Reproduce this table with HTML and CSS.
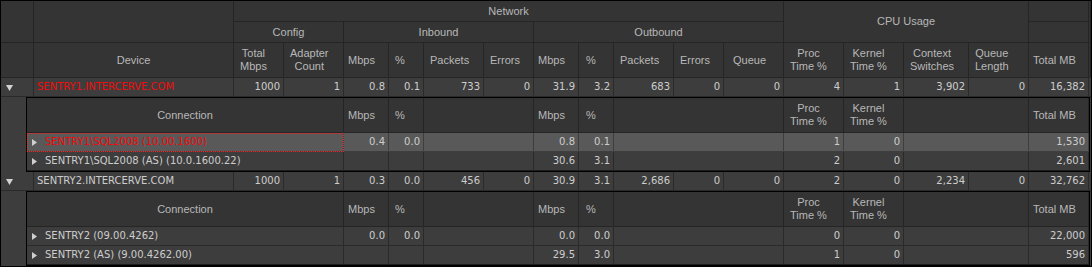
FILE: index.html
```html
<!DOCTYPE html>
<html>
<head>
<meta charset="utf-8">
<link rel="stylesheet" href="styles.css">
</head>
<body>
<div class="grid">
  <div class="head main-cols">
    <div class="hc c1"></div>
    <div class="hc c2"></div>
    <div class="hc net">Network</div>
    <div class="hc cpu">CPU Usage</div>
    <div class="hc r1 c18"></div>
    <div class="hc r1 c19"></div>
    <div class="hc config">Config</div>
    <div class="hc inbound">Inbound</div>
    <div class="hc outbound">Outbound</div>
    <div class="hc r2 c18"></div>
    <div class="hc r2 c19"></div>

    <div class="hc"></div>
    <div class="hc center">Device</div>
    <div class="hc leaf"><span>Total<br>Mbps</span></div>
    <div class="hc leaf"><span>Adapter<br>Count</span></div>
    <div class="hc leaf p4">Mbps</div>
    <div class="hc leaf">%</div>
    <div class="hc leaf">Packets</div>
    <div class="hc leaf">Errors</div>
    <div class="hc leaf p4">Mbps</div>
    <div class="hc leaf p7">%</div>
    <div class="hc leaf">Packets</div>
    <div class="hc leaf">Errors</div>
    <div class="hc leaf p9">Queue</div>
    <div class="hc leaf"><span>Proc<br>Time %</span></div>
    <div class="hc leaf"><span>Kernel<br>Time %</span></div>
    <div class="hc leaf"><span>Context<br>Switches</span></div>
    <div class="hc leaf"><span>Queue<br>Length</span></div>
    <div class="hc leaf p4">Total MB</div>
    <div class="hc"></div>
  </div>

  <div class="row main-cols">
    <div class="dc exp"><svg width="7" height="6" viewBox="0 0 7 6"><polygon points="0,0 7,0 3.5,6" fill="#d2d2d2"/></svg></div>
    <div class="dc name red">SENTRY1.INTERCERVE.COM</div>
    <div class="dc num">1000</div>
    <div class="dc num">1</div>
    <div class="dc num">0.8</div>
    <div class="dc num">0.1</div>
    <div class="dc num">733</div>
    <div class="dc num">0</div>
    <div class="dc num">31.9</div>
    <div class="dc num">3.2</div>
    <div class="dc num">683</div>
    <div class="dc num">0</div>
    <div class="dc num">0</div>
    <div class="dc num">4</div>
    <div class="dc num">1</div>
    <div class="dc num">3,902</div>
    <div class="dc num">0</div>
    <div class="dc num">16,382</div>
    <div class="dc fill"></div>
  </div>

  <div class="detail-wrap">
    <div class="detail">
      <div class="dhead det-cols">
        <div class="hc center">Connection</div>
        <div class="hc leaf p4">Mbps</div>
        <div class="hc leaf">%</div>
        <div class="hc"></div>
        <div class="hc leaf p4">Mbps</div>
        <div class="hc leaf p7">%</div>
        <div class="hc"></div>
        <div class="hc leaf"><span>Proc<br>Time %</span></div>
        <div class="hc leaf"><span>Kernel<br>Time %</span></div>
        <div class="hc"></div>
        <div class="hc leaf p4">Total MB</div>
      </div>
      <div class="row det-cols selected">
        <div class="dc conn focus red"><svg width="5" height="7" viewBox="0 0 5 7"><polygon points="0,0 5,3.5 0,7" fill="#cfcfcf"/></svg><span>SENTRY1\SQL2008 (10.00.1600)</span></div>
        <div class="dc num">0.4</div>
        <div class="dc num">0.0</div>
        <div class="dc"></div>
        <div class="dc num">0.8</div>
        <div class="dc num">0.1</div>
        <div class="dc"></div>
        <div class="dc num">1</div>
        <div class="dc num">0</div>
        <div class="dc"></div>
        <div class="dc num">1,530</div>
      </div>
      <div class="row det-cols last">
        <div class="dc conn"><svg width="5" height="7" viewBox="0 0 5 7"><polygon points="0,0 5,3.5 0,7" fill="#cfcfcf"/></svg><span>SENTRY1\SQL2008 (AS) (10.0.1600.22)</span></div>
        <div class="dc"></div>
        <div class="dc"></div>
        <div class="dc"></div>
        <div class="dc num">30.6</div>
        <div class="dc num">3.1</div>
        <div class="dc"></div>
        <div class="dc num">2</div>
        <div class="dc num">0</div>
        <div class="dc"></div>
        <div class="dc num">2,601</div>
      </div>
    </div>
  </div>

  <div class="row main-cols">
    <div class="dc exp"><svg width="7" height="6" viewBox="0 0 7 6"><polygon points="0,0 7,0 3.5,6" fill="#d2d2d2"/></svg></div>
    <div class="dc name">SENTRY2.INTERCERVE.COM</div>
    <div class="dc num">1000</div>
    <div class="dc num">1</div>
    <div class="dc num">0.3</div>
    <div class="dc num">0.0</div>
    <div class="dc num">456</div>
    <div class="dc num">0</div>
    <div class="dc num">30.9</div>
    <div class="dc num">3.1</div>
    <div class="dc num">2,686</div>
    <div class="dc num">0</div>
    <div class="dc num">0</div>
    <div class="dc num">2</div>
    <div class="dc num">0</div>
    <div class="dc num">2,234</div>
    <div class="dc num">0</div>
    <div class="dc num">32,762</div>
    <div class="dc fill"></div>
  </div>

  <div class="detail-wrap">
    <div class="detail">
      <div class="dhead det-cols">
        <div class="hc center">Connection</div>
        <div class="hc leaf p4">Mbps</div>
        <div class="hc leaf">%</div>
        <div class="hc"></div>
        <div class="hc leaf p4">Mbps</div>
        <div class="hc leaf p7">%</div>
        <div class="hc"></div>
        <div class="hc leaf"><span>Proc<br>Time %</span></div>
        <div class="hc leaf"><span>Kernel<br>Time %</span></div>
        <div class="hc"></div>
        <div class="hc leaf p4">Total MB</div>
      </div>
      <div class="row det-cols">
        <div class="dc conn"><svg width="5" height="7" viewBox="0 0 5 7"><polygon points="0,0 5,3.5 0,7" fill="#cfcfcf"/></svg><span>SENTRY2 (09.00.4262)</span></div>
        <div class="dc num">0.0</div>
        <div class="dc num">0.0</div>
        <div class="dc"></div>
        <div class="dc num">0.0</div>
        <div class="dc num">0.0</div>
        <div class="dc"></div>
        <div class="dc num">0</div>
        <div class="dc num">0</div>
        <div class="dc"></div>
        <div class="dc num">22,000</div>
      </div>
      <div class="row det-cols last">
        <div class="dc conn"><svg width="5" height="7" viewBox="0 0 5 7"><polygon points="0,0 5,3.5 0,7" fill="#cfcfcf"/></svg><span>SENTRY2 (AS) (9.00.4262.00)</span></div>
        <div class="dc"></div>
        <div class="dc"></div>
        <div class="dc"></div>
        <div class="dc num">29.5</div>
        <div class="dc num">3.0</div>
        <div class="dc"></div>
        <div class="dc num">1</div>
        <div class="dc num">0</div>
        <div class="dc"></div>
        <div class="dc num">596</div>
      </div>
    </div>
  </div>
</div>
</body>
</html>
```

FILE: styles.css
```css
* { box-sizing: border-box; }
html, body { margin: 0; padding: 0; background: #343434; }
.grid {
  width: 1092px;
  height: 267px;
  border: 1px solid #000;
  background: #3d3d3d;
  overflow: hidden;
}
.main-cols {
  display: grid;
  grid-template-columns: 33px 200px 50px 60px 45px 35px 60px 50px 45px 35px 60px 50px 60px 60px 60px 65px 60px 60px 1fr;
}
.det-cols {
  display: grid;
  grid-template-columns: 317px 45px 35px 110px 45px 35px 170px 60px 60px 125px 60px;
}
.head {
  grid-template-rows: 21px 21px 35px;
  background: #343434;
}
.dhead {
  height: 35px;
  background: #343434;
}
.hc {
  border-right: 1px solid #252525;
  border-bottom: 1px solid #252525;
  color: #b8b8b8;
  font-family: "Liberation Sans", Arial, sans-serif;
  font-size: 11px;
  line-height: 13px;
  display: flex;
  align-items: center;
  justify-content: center;
  white-space: nowrap;
}
.hc.leaf { justify-content: flex-start; padding-left: 6px; }
.hc.leaf span { text-align: center; display: block; }
.hc.p4 { padding-left: 4px; }
.hc.p7 { padding-left: 7px; }
.hc.p9 { padding-left: 9px; }
.c1 { grid-column: 1; grid-row: 1 / 3; }
.c2 { grid-column: 2; grid-row: 1 / 3; }
.net { grid-column: 3 / 14; grid-row: 1; }
.cpu { grid-column: 14 / 18; grid-row: 1 / 3; }
.config { grid-column: 3 / 5; grid-row: 2; }
.inbound { grid-column: 5 / 9; grid-row: 2; }
.outbound { grid-column: 9 / 14; grid-row: 2; }
.r1 { grid-row: 1; }
.r2 { grid-row: 2; }
.c18 { grid-column: 18; }
.c19 { grid-column: 19; }

.row {
  height: 19px;
  background: #3d3d3d;
}
.row.selected { background: #595959; }
.dc {
  border-right: 1px solid rgba(0,0,0,0.3);
  border-bottom: 1px solid rgba(0,0,0,0.3);
  color: #cdcdcd;
  font-family: "DejaVu Sans", Verdana, sans-serif;
  font-size: 10px;
  line-height: 18px;
  white-space: nowrap;
  overflow: hidden;
  display: flex;
  align-items: center;
}
.dc.num { justify-content: flex-end; padding-right: 3px; }
.dc.name { padding-left: 3px; }
.dc.exp { padding-left: 5px; padding-top: 1px; }
.dc.fill { border-right: none; }
.dc.conn { padding-left: 5px; gap: 8px; }
.dc.red, .dc.red span { color: #f20c0c; }
.dc.focus { outline: 1px dotted #ff2020; outline-offset: -1px; }
.row.last .dc { border-bottom: 1px solid #1e1e1e; }

.detail-wrap {
  display: flex;
  padding-left: 25px;
  background: #3d3d3d;
}
.detail {
  width: 1064px;
  border: 1px solid #000;
  background: #343434;
}
```
